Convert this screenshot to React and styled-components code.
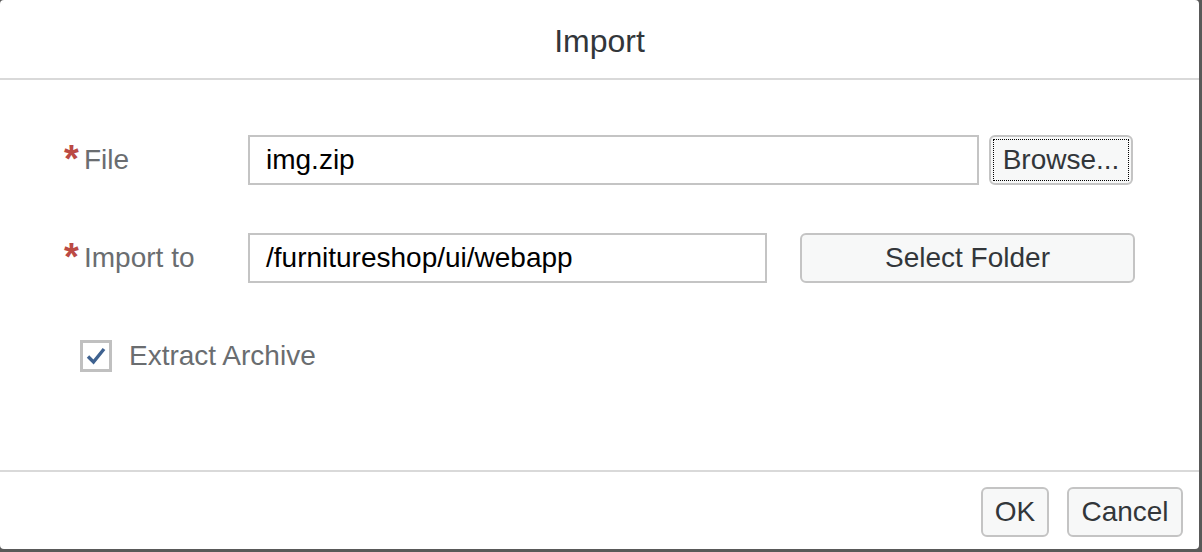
import React from "react";
import styled, { createGlobalStyle } from "styled-components";

const Global = createGlobalStyle`
  html, body { margin: 0; padding: 0; }
  body {
    background: #595959;
    width: 1202px;
    height: 552px;
    overflow: hidden;
    font-family: "Liberation Sans", Arial, sans-serif;
  }
`;

const Dialog = styled.div`
  width: 1199px;
  height: 549px;
  background: #ffffff;
  border-radius: 4px;
  display: flex;
  flex-direction: column;
  box-sizing: border-box;
`;

const Header = styled.div`
  height: 80px;
  box-sizing: border-box;
  border-bottom: 2px solid #d9d9d9;
  padding-top: 4px;
  display: flex;
  align-items: center;
  justify-content: center;
  font-size: 32px;
  color: #32363a;
`;

const Body = styled.div`
  flex: 1;
  padding: 55px 0 0 64px;
  display: flex;
  flex-direction: column;
`;

const Row = styled.div`
  display: flex;
  align-items: center;
  height: 50px;
  margin-bottom: ${(p) => p.$mb || 0}px;
`;

const Label = styled.label`
  width: 184px;
  display: flex;
  align-items: center;
  font-size: 28px;
  color: #6a6d70;
`;

const Star = styled.span`
  color: #bb4a44;
  font-weight: bold;
  font-size: 38px;
  width: 20px;
  margin-top: -2px;
  line-height: 1;
`;

const Input = styled.div`
  width: ${(p) => p.$w}px;
  height: 50px;
  box-sizing: border-box;
  border: 2px solid #c4c4c4;
  display: flex;
  align-items: center;
  padding-left: 16px;
  font-size: 28px;
  color: #000;
  margin-right: ${(p) => p.$gap}px;
`;

const Button = styled.button`
  width: ${(p) => p.$w}px;
  height: 50px;
  box-sizing: border-box;
  border: 2px solid #c4c4c4;
  border-radius: 6px;
  background: #f7f8f8;
  font-family: "Liberation Sans", Arial, sans-serif;
  font-size: 28px;
  color: #32363a;
  padding: 0;
  position: relative;
  display: flex;
  align-items: center;
  justify-content: center;
  cursor: pointer;

  ${(p) =>
    p.$focus &&
    `
    &::after {
      content: "";
      position: absolute;
      inset: 2px;
      border: 1px dotted #000;
    }
  `}
`;

const CheckRow = styled.div`
  display: flex;
  align-items: center;
  margin-top: 57px;
  padding-left: 16px;
  height: 32px;
`;

const Box = styled.div`
  width: 32px;
  height: 32px;
  box-sizing: border-box;
  border: 3px solid #c0c0c0;
  display: flex;
  align-items: center;
  justify-content: center;
  margin-right: 17px;
`;

const CheckLabel = styled.span`
  font-size: 28px;
  color: #6a6d70;
`;

const Footer = styled.div`
  border-top: 2px solid #d9d9d9;
  padding: 15px 16px 12px 0;
  display: flex;
  justify-content: flex-end;
  gap: 18px;
`;

export default function App() {
  return (
    <>
      <Global />
      <Dialog>
        <Header>Import</Header>
        <Body>
          <Row $mb={48}>
            <Label>
              <Star>*</Star>File
            </Label>
            <Input $w={731} $gap={10}>img.zip</Input>
            <Button $w={144} $focus>
              Browse...
            </Button>
          </Row>
          <Row>
            <Label>
              <Star>*</Star>Import to
            </Label>
            <Input $w={519} $gap={33}>/furnitureshop/ui/webapp</Input>
            <Button $w={335}>Select Folder</Button>
          </Row>
          <CheckRow>
            <Box>
              <svg width="22" height="20" viewBox="0 0 22 20">
                <path
                  d="M3 10.5 L8.5 16 L19 3"
                  fill="none"
                  stroke="#3f6290"
                  strokeWidth="3.4"
                />
              </svg>
            </Box>
            <CheckLabel>Extract Archive</CheckLabel>
          </CheckRow>
        </Body>
        <Footer>
          <Button $w={68}>OK</Button>
          <Button $w={116}>Cancel</Button>
        </Footer>
      </Dialog>
    </>
  );
}
